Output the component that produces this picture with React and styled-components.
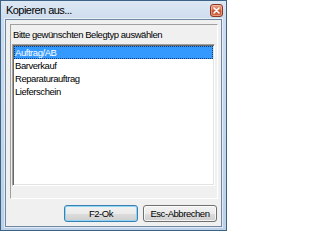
import React from "react";
import styled, { createGlobalStyle } from "styled-components";

const Global = createGlobalStyle`
  html, body { margin: 0; padding: 0; background: #ffffff; }
  #root { width: 227px; height: 231px; }
  * { box-sizing: border-box; }
`;

const Window = styled.div`
  width: 227px;
  height: 231px;
  border: 1px solid #3a6385;
  background: linear-gradient(180deg, #dde8f4 0px, #cddcee 18px, #c3d5ea 60%, #bcd0e7 100%);
  display: flex;
  flex-direction: column;
  font-family: "Liberation Sans", Arial, sans-serif;
`;

const TitleBar = styled.div`
  height: 18px;
  display: flex;
  align-items: flex-start;
  justify-content: space-between;
  padding: 0 3px 0 5px;
`;

const Title = styled.span`
  font-size: 11px;
  letter-spacing: -0.55px;
  line-height: 16px;
  margin-top: 1px;
  color: #000;
`;

const CloseButton = styled.div`
  width: 13px;
  height: 13px;
  margin-top: 3px;
  border: 1px solid #8a3a22;
  border-radius: 3px;
  background: linear-gradient(180deg, #eaa189 0%, #d86d4d 48%, #c64f2f 52%, #d06a48 100%);
  box-shadow: inset 0 0 0 1px rgba(255, 220, 200, 0.45);
  display: flex;
  align-items: center;
  justify-content: center;
`;

const Client = styled.div`
  flex: 1;
  margin: 0 4px 3px 4px;
  border: 1px solid #6f87a3;
  box-shadow: 0 0 0 1px rgba(255, 255, 255, 0.55);
  background: #f0f0f0;
  display: flex;
  flex-direction: column;
  padding: 4px 3px 4px 4px;
`;

const Panel = styled.div`
  height: 175px;
  border-style: solid;
  border-width: 1px;
  border-color: #a0a0a0 #ffffff #ffffff #a0a0a0;
  display: flex;
  flex-direction: column;
`;

const Label = styled.div`
  height: 19px;
  padding-left: 2px;
  font-size: 9.5px;
  letter-spacing: -0.45px;
  line-height: 19px;
  color: #000;
`;

const ListBox = styled.div`
  width: 203px;
  height: 142px;
  margin-left: 1px;
  border-style: solid;
  border-width: 1px;
  border-color: #a0a0a0 #ffffff #ffffff #a0a0a0;
  box-shadow: inset 1px 1px 0 #696969, inset -1px -1px 0 #e3e3e3;
  background: #ffffff;
  padding: 1px;
  display: flex;
  flex-direction: column;
`;

const Row = styled.div`
  height: 13px;
  border: 1px ${(p) => (p.$selected ? "dotted #0e3a6c" : "solid transparent")};
  background: ${(p) => (p.$selected ? "#3399ff" : "transparent")};
  color: ${(p) => (p.$selected ? "#ffffff" : "#000000")};
  font-size: 9.5px;
  letter-spacing: -0.45px;
  line-height: 11px;
  white-space: nowrap;
`;

const ButtonRow = styled.div`
  margin-top: 6px;
  display: flex;
  justify-content: flex-end;
  gap: 5px;
  padding-right: 1px;
`;

const Button = styled.div`
  width: 74px;
  height: 17px;
  border: 1px solid ${(p) => (p.$default ? "#3c7fb1" : "#707070")};
  border-radius: 3px;
  background: linear-gradient(180deg, #f2f2f2 0%, #ebebeb 50%, #dddddd 51%, #cfcfcf 100%);
  box-shadow: inset 0 0 0 1px ${(p) => (p.$default ? "#8fd6f5" : "rgba(255,255,255,0.75)")};
  display: flex;
  align-items: center;
  justify-content: center;
  font-size: 9.5px;
  letter-spacing: -0.45px;
  color: #000;
`;

const items = ["Auftrag/AB", "Barverkauf", "Reparaturauftrag", "Lieferschein"];

export default function App() {
  return (
    <>
      <Global />
      <Window>
        <TitleBar>
          <Title>Kopieren aus...</Title>
          <CloseButton>
            <svg width="7" height="7" viewBox="0 0 7 7">
              <path d="M1 1 L6 6 M6 1 L1 6" stroke="#ffffff" strokeWidth="1.6" strokeLinecap="round" />
            </svg>
          </CloseButton>
        </TitleBar>
        <Client>
          <Panel>
            <Label>Bitte gewünschten Belegtyp auswählen</Label>
            <ListBox>
              {items.map((it, i) => (
                <Row key={it} $selected={i === 0}>
                  {it}
                </Row>
              ))}
            </ListBox>
          </Panel>
          <ButtonRow>
            <Button $default>F2-Ok</Button>
            <Button>Esc-Abbrechen</Button>
          </ButtonRow>
        </Client>
      </Window>
    </>
  );
}
